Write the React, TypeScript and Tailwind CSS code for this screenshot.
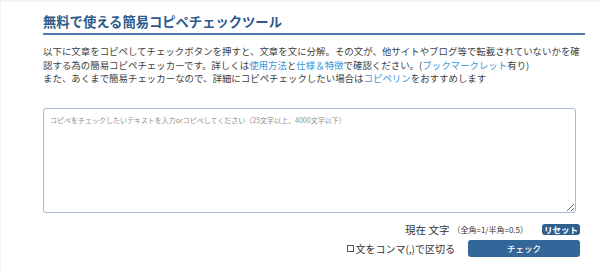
import React, { useState } from 'react';

const jp = { fontFamily: '"Noto Sans CJK JP", "Noto Sans", sans-serif' };

export default function App() {
  const [text, setText] = useState('');
  const [split, setSplit] = useState(false);

  return (
    <div className="h-[270px] w-[600px] bg-[#f3f3f3] pt-[2px] pl-[1px]" style={jp}>
      <div className="h-full bg-white">
        <div className="ml-[42px] w-[542px]">
          {/* Title */}
          <h1 className="pt-[11px] pb-[2px] border-b-2 border-[#4f78ad] text-[13.3px] leading-[18px] font-bold text-[#2d5a8b]">
            無料で使える簡易コピペチェックツール
          </h1>

          {/* Description */}
          <p className="mt-[10px] text-[9.45px] leading-[13.5px] text-[#404040]">
            以下に文章をコピペしてチェックボタンを押すと、文章を文に分解。その文が、他サイトやブログ等で転載されていないかを確
            <br />
            認する為の簡易コピペチェッカーです。詳しくは
            <a href="#" className="text-[#3a97d8]">使用方法</a>と
            <a href="#" className="text-[#3a97d8]">仕様＆特徴</a>で確認ください。(
            <a href="#" className="text-[#3a97d8]">ブックマークレット</a>有り)
            <br />
            また、あくまで簡易チェッカーなので、詳細にコピペチェックしたい場合は
            <a href="#" className="text-[#3a97d8]">コピペリン</a>をおすすめします
          </p>

          {/* Input */}
          <textarea
            value={text}
            onChange={(e) => setText(e.target.value)}
            placeholder="コピペをチェックしたいテキストを入力orコピペしてください（25文字以上、4000文字以下）"
            className="mt-[22px] block w-[533px] h-[105px] border border-[#a9b9cf] rounded-[3px] px-[6px] py-[6px] text-[7px] leading-[10px] text-[#333] placeholder:text-[#8f8f8f] outline-none"
          />

          {/* Counter */}
          <div className="mt-[11px] mr-[5px] flex items-center justify-end h-[12px]">
            <span className="text-[10.5px] text-[#333] whitespace-pre">現在 {text.length > 0 ? text.length : ''}文字</span>
            <span className="ml-[3px] text-[8px] text-[#333]">（全角=1/半角=0.5）</span>
            <button
              onClick={() => setText('')}
              className="ml-[14px] w-[38px] h-[11px] rounded-[3px] bg-[#2f5f8f] text-white text-[8.5px] leading-[11px] font-bold"
            >
              リセット
            </button>
          </div>

          {/* Actions */}
          <div className="mt-[4px] mr-[5px] flex items-center justify-end">
            <label className="flex items-center text-[10px] text-[#333] cursor-pointer">
              <input
                type="checkbox"
                checked={split}
                onChange={(e) => setSplit(e.target.checked)}
                className="appearance-none w-[7px] h-[7px] border border-[#555] bg-white mr-[1px]"
              />
              文をコンマ(,)で区切る
            </label>
            <button className="ml-[13px] w-[112px] h-[17px] rounded-[3px] bg-[#336699] text-white text-[8.5px] leading-[17px] font-medium">
              チェック
            </button>
          </div>
        </div>
      </div>
    </div>
  );
}
